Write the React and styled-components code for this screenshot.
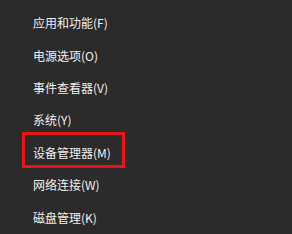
import React from "react";
import styled, { createGlobalStyle } from "styled-components";

const Global = createGlobalStyle`
  html, body { margin: 0; padding: 0; background: #2b2b2b; }
  body { width: 292px; height: 234px; overflow: hidden; }
`;

const Menu = styled.div`
  width: 292px;
  height: 234px;
  box-sizing: border-box;
  background: #2b2b2b;
  padding-top: 7px;
  display: flex;
  flex-direction: column;
  font-family: "Noto Sans CJK SC", "Noto Sans", sans-serif;
`;

const Item = styled.div`
  position: relative;
  height: 33px;
  display: flex;
  align-items: center;
  padding-left: 33px;
  color: #f0f0f0;
  font-size: 12px;
  line-height: 1;
  white-space: nowrap;
`;

const Highlight = styled.div`
  position: absolute;
  left: 22px;
  top: -5px;
  width: 103px;
  height: 36px;
  box-sizing: border-box;
  border: 3px solid #e8141c;
  pointer-events: none;
`;

const items = [
  "应用和功能(F)",
  "电源选项(O)",
  "事件查看器(V)",
  "系统(Y)",
  "设备管理器(M)",
  "网络连接(W)",
  "磁盘管理(K)",
];

export default function App() {
  return (
    <>
      <Global />
      <Menu>
        {items.map((t, i) => (
          <Item key={t}>
            {i === 4 && <Highlight />}
            {t}
          </Item>
        ))}
      </Menu>
    </>
  );
}
